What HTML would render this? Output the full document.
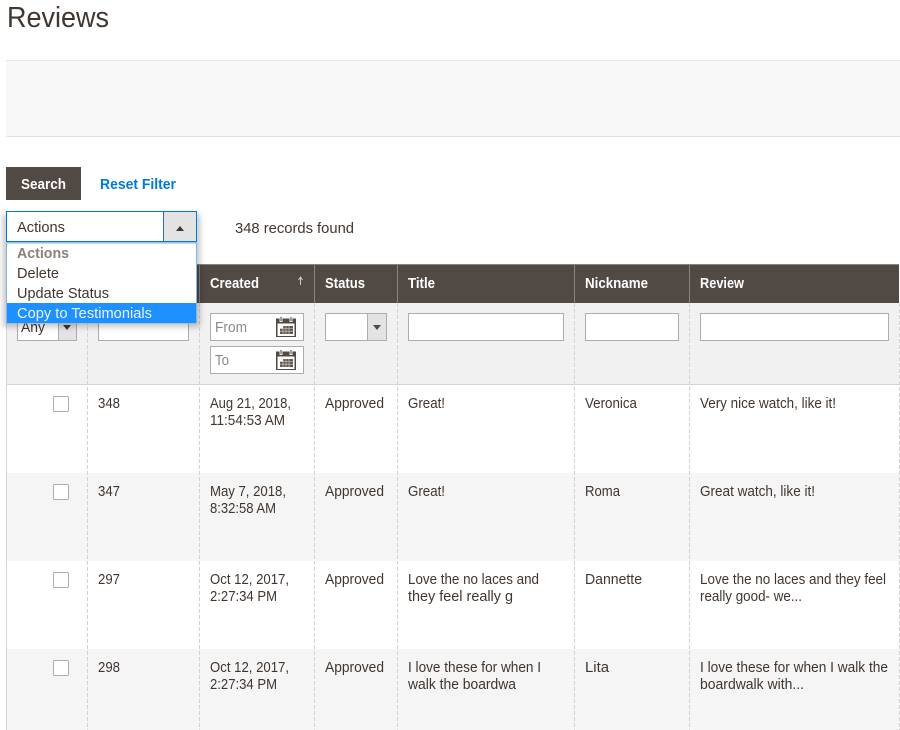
<!DOCTYPE html>
<html><head><meta charset="utf-8"><title>Reviews</title>
<style>
html,body{margin:0;padding:0;background:#fff;width:900px;height:730px;overflow:hidden}
svg{display:block}
text{font-family:"Liberation Sans",sans-serif;font-size:14.4px;fill:#41362f}
.b{font-weight:bold}
.h{font-weight:bold;fill:#fff}
</style></head><body>
<svg width="900" height="730" viewBox="0 0 900 730" xmlns="http://www.w3.org/2000/svg">
<defs>
<g id="cal">
<rect x="1" y="2.500" width="20" height="18.500" fill="#514943"/>
<rect x="2.500" y="7.500" width="17" height="12.500" fill="#fff"/>
<rect x="5" y="10" width="13" height="8" fill="#5f5650"/>
<path d="M5 12.500h13M5 15.200h13M8 10v8M11 10v8M14 10v8" stroke="#d8d5d2" stroke-width="0.600"/>
<path d="M5 10h3v2.500h-3z" fill="#fff"/>
<rect x="4.500" y="1" width="3" height="5" fill="#f1e9e2"/><rect x="14.500" y="1" width="3" height="5" fill="#f1e9e2"/>
<rect x="5.500" y="1" width="1" height="4" fill="#514943"/><rect x="15.500" y="1" width="1" height="4" fill="#514943"/>
</g>
</defs>

<text x="7" y="27" style="font-size:29px" textLength="102" lengthAdjust="spacingAndGlyphs">Reviews</text>
<rect x="6" y="60.500" width="894" height="76" fill="#f8f8f8"/>
<path d="M6 60.500H900M6 136.500H900" stroke="#e3e3e3"/>

<rect x="6" y="167" width="75" height="33" fill="#514943"/>
<text x="21" y="189" class="b" style="fill:#fff" textLength="45" lengthAdjust="spacingAndGlyphs">Search</text>
<text x="100" y="189" class="b" style="fill:#007bdb" textLength="76" lengthAdjust="spacingAndGlyphs">Reset Filter</text>
<text x="235" y="233" textLength="119" lengthAdjust="spacingAndGlyphs">348 records found</text>

<!-- table header -->
<rect x="6" y="264" width="893" height="39" fill="#514943"/>
<path d="M6 264.500H899" stroke="#8a837f"/>
<path d="M199.500 264V303M314.500 264V303M397.500 264V303M574.500 264V303M689.500 264V303" stroke="#8a837f"/>
<text x="210" y="288" class="h" textLength="49" lengthAdjust="spacingAndGlyphs">Created</text>
<text x="325" y="288" class="h" textLength="40" lengthAdjust="spacingAndGlyphs">Status</text>
<text x="408" y="288" class="h" textLength="27" lengthAdjust="spacingAndGlyphs">Title</text>
<text x="585" y="288" class="h" textLength="63" lengthAdjust="spacingAndGlyphs">Nickname</text>
<text x="700" y="288" class="h" textLength="44" lengthAdjust="spacingAndGlyphs">Review</text>
<path d="M300.500 285V278M298.500 280l2-3 2 3" stroke="#cfcac6" fill="none"/>

<!-- filter row + body rows -->
<rect x="6" y="303" width="893" height="81" fill="#f1f1f1"/>
<rect x="6" y="384" width="893" height="1" fill="#d6d6d6"/>
<rect x="7" y="473" width="892" height="88" fill="#f5f5f5"/>
<rect x="7" y="649" width="892" height="81" fill="#f5f5f5"/>
<path d="M6.500 303V730" stroke="#d6d6d6"/>
<path d="M87.500 303V730M199.500 303V730M314.500 303V730M397.500 303V730M574.500 303V730M689.500 303V730M899.500 303V730" stroke="#d2d2d2" stroke-dasharray="4 2"/>

<!-- filters -->
<rect x="17.500" y="313.500" width="59" height="27" fill="#fff" stroke="#adadad"/>
<rect x="58" y="314" width="18" height="26" fill="#e3e3e3"/>
<path d="M58.500 314V340" stroke="#adadad"/>
<path d="M63 325h8l-4 5z" fill="#41362f"/>
<text x="21" y="332" textLength="24" lengthAdjust="spacingAndGlyphs">Any</text>
<rect x="98.500" y="313.500" width="90" height="27" fill="#fff" stroke="#adadad"/>

<rect x="210.500" y="313.500" width="93" height="27" fill="#fff" stroke="#adadad"/>
<text x="215" y="332" style="fill:#8a8a8a" textLength="32" lengthAdjust="spacingAndGlyphs">From</text>
<use href="#cal" x="275" y="316"/>
<rect x="210.500" y="346.500" width="93" height="27" fill="#fff" stroke="#adadad"/>
<text x="215" y="365" style="fill:#8a8a8a" textLength="14" lengthAdjust="spacingAndGlyphs">To</text>
<use href="#cal" x="275" y="349"/>

<rect x="325.500" y="313.500" width="61" height="27" fill="#fff" stroke="#adadad"/>
<rect x="367" y="314" width="19" height="26" fill="#e3e3e3"/>
<path d="M367.500 314V340" stroke="#adadad"/>
<path d="M373 325h8l-4 5z" fill="#514943"/>

<rect x="408.500" y="313.500" width="155" height="27" fill="#fff" stroke="#adadad"/>
<rect x="585.500" y="313.500" width="93" height="27" fill="#fff" stroke="#adadad"/>
<rect x="700.500" y="313.500" width="188" height="27" fill="#fff" stroke="#adadad"/>

<!-- checkboxes -->
<rect x="53.500" y="396.500" width="15" height="15" rx="1" fill="#fff" stroke="#adadad"/>
<rect x="53.500" y="484.500" width="15" height="15" rx="1" fill="#fff" stroke="#adadad"/>
<rect x="53.500" y="572.500" width="15" height="15" rx="1" fill="#fff" stroke="#adadad"/>
<rect x="53.500" y="660.500" width="15" height="15" rx="1" fill="#fff" stroke="#adadad"/>

<!-- row 1 -->
<text x="98" y="408" textLength="22" lengthAdjust="spacingAndGlyphs">348</text>
<text x="210" y="408" textLength="81" lengthAdjust="spacingAndGlyphs">Aug 21, 2018,</text>
<text x="210" y="425" textLength="75" lengthAdjust="spacingAndGlyphs">11:54:53 AM</text>
<text x="325" y="408" textLength="59" lengthAdjust="spacingAndGlyphs">Approved</text>
<text x="408" y="408" textLength="37" lengthAdjust="spacingAndGlyphs">Great!</text>
<text x="585" y="408" textLength="52" lengthAdjust="spacingAndGlyphs">Veronica</text>
<text x="700" y="408" textLength="136" lengthAdjust="spacingAndGlyphs">Very nice watch, like it!</text>

<!-- row 2 -->
<text x="98" y="496" textLength="22" lengthAdjust="spacingAndGlyphs">347</text>
<text x="210" y="496" textLength="76" lengthAdjust="spacingAndGlyphs">May 7, 2018,</text>
<text x="210" y="513" textLength="66" lengthAdjust="spacingAndGlyphs">8:32:58 AM</text>
<text x="325" y="496" textLength="59" lengthAdjust="spacingAndGlyphs">Approved</text>
<text x="408" y="496" textLength="37" lengthAdjust="spacingAndGlyphs">Great!</text>
<text x="585" y="496" textLength="35" lengthAdjust="spacingAndGlyphs">Roma</text>
<text x="700" y="496" textLength="115" lengthAdjust="spacingAndGlyphs">Great watch, like it!</text>

<!-- row 3 -->
<text x="98" y="584" textLength="22" lengthAdjust="spacingAndGlyphs">297</text>
<text x="210" y="584" textLength="79" lengthAdjust="spacingAndGlyphs">Oct 12, 2017,</text>
<text x="210" y="601" textLength="67" lengthAdjust="spacingAndGlyphs">2:27:34 PM</text>
<text x="325" y="584" textLength="59" lengthAdjust="spacingAndGlyphs">Approved</text>
<text x="408" y="584" textLength="131" lengthAdjust="spacingAndGlyphs">Love the no laces and</text>
<text x="408" y="601" textLength="105" lengthAdjust="spacingAndGlyphs">they feel really g</text>
<text x="585" y="584" textLength="57" lengthAdjust="spacingAndGlyphs">Dannette</text>
<text x="700" y="584" textLength="186" lengthAdjust="spacingAndGlyphs">Love the no laces and they feel</text>
<text x="700" y="601" textLength="102" lengthAdjust="spacingAndGlyphs">really good- we...</text>

<!-- row 4 -->
<text x="98" y="672" textLength="22" lengthAdjust="spacingAndGlyphs">298</text>
<text x="210" y="672" textLength="79" lengthAdjust="spacingAndGlyphs">Oct 12, 2017,</text>
<text x="210" y="689" textLength="67" lengthAdjust="spacingAndGlyphs">2:27:34 PM</text>
<text x="325" y="672" textLength="59" lengthAdjust="spacingAndGlyphs">Approved</text>
<text x="408" y="672" textLength="133" lengthAdjust="spacingAndGlyphs">I love these for when I</text>
<text x="408" y="689" textLength="108" lengthAdjust="spacingAndGlyphs">walk the boardwa</text>
<text x="585" y="672" textLength="24" lengthAdjust="spacingAndGlyphs">Lita</text>
<text x="700" y="672" textLength="188" lengthAdjust="spacingAndGlyphs">I love these for when I walk the</text>
<text x="700" y="689" textLength="104" lengthAdjust="spacingAndGlyphs">boardwalk with...</text>

<!-- dropdown shadow -->
<defs><filter id="s" x="-15%" y="-15%" width="130%" height="130%"><feGaussianBlur stdDeviation="3"/></filter></defs>
<rect x="3" y="214" width="197" height="113" fill="#000" opacity=".22" filter="url(#s)"/>

<!-- actions button -->
<rect x="6.500" y="211.500" width="190" height="30" fill="#fff" stroke="#007bdb"/>
<rect x="164" y="212" width="32" height="29" fill="#e3e3e3"/>
<path d="M163.500 212V241" stroke="#2a6ea6"/>
<path d="M176 231h8l-4-5z" fill="#41362f"/>
<text x="17" y="232" textLength="48" lengthAdjust="spacingAndGlyphs">Actions</text>

<!-- actions list -->
<rect x="6.500" y="243" width="190" height="80" fill="#fff" stroke="#7fb5e6"/>
<rect x="7" y="303" width="189" height="20" fill="#1e90ff"/>
<text x="17" y="258" class="b" style="fill:#8a8178" textLength="52" lengthAdjust="spacingAndGlyphs">Actions</text>
<text x="17" y="278" textLength="42" lengthAdjust="spacingAndGlyphs">Delete</text>
<text x="17" y="298" textLength="92" lengthAdjust="spacingAndGlyphs">Update Status</text>
<text x="17" y="318" style="fill:#eaf4ff" textLength="135" lengthAdjust="spacingAndGlyphs">Copy to Testimonials</text>
</svg>
</body></html>
